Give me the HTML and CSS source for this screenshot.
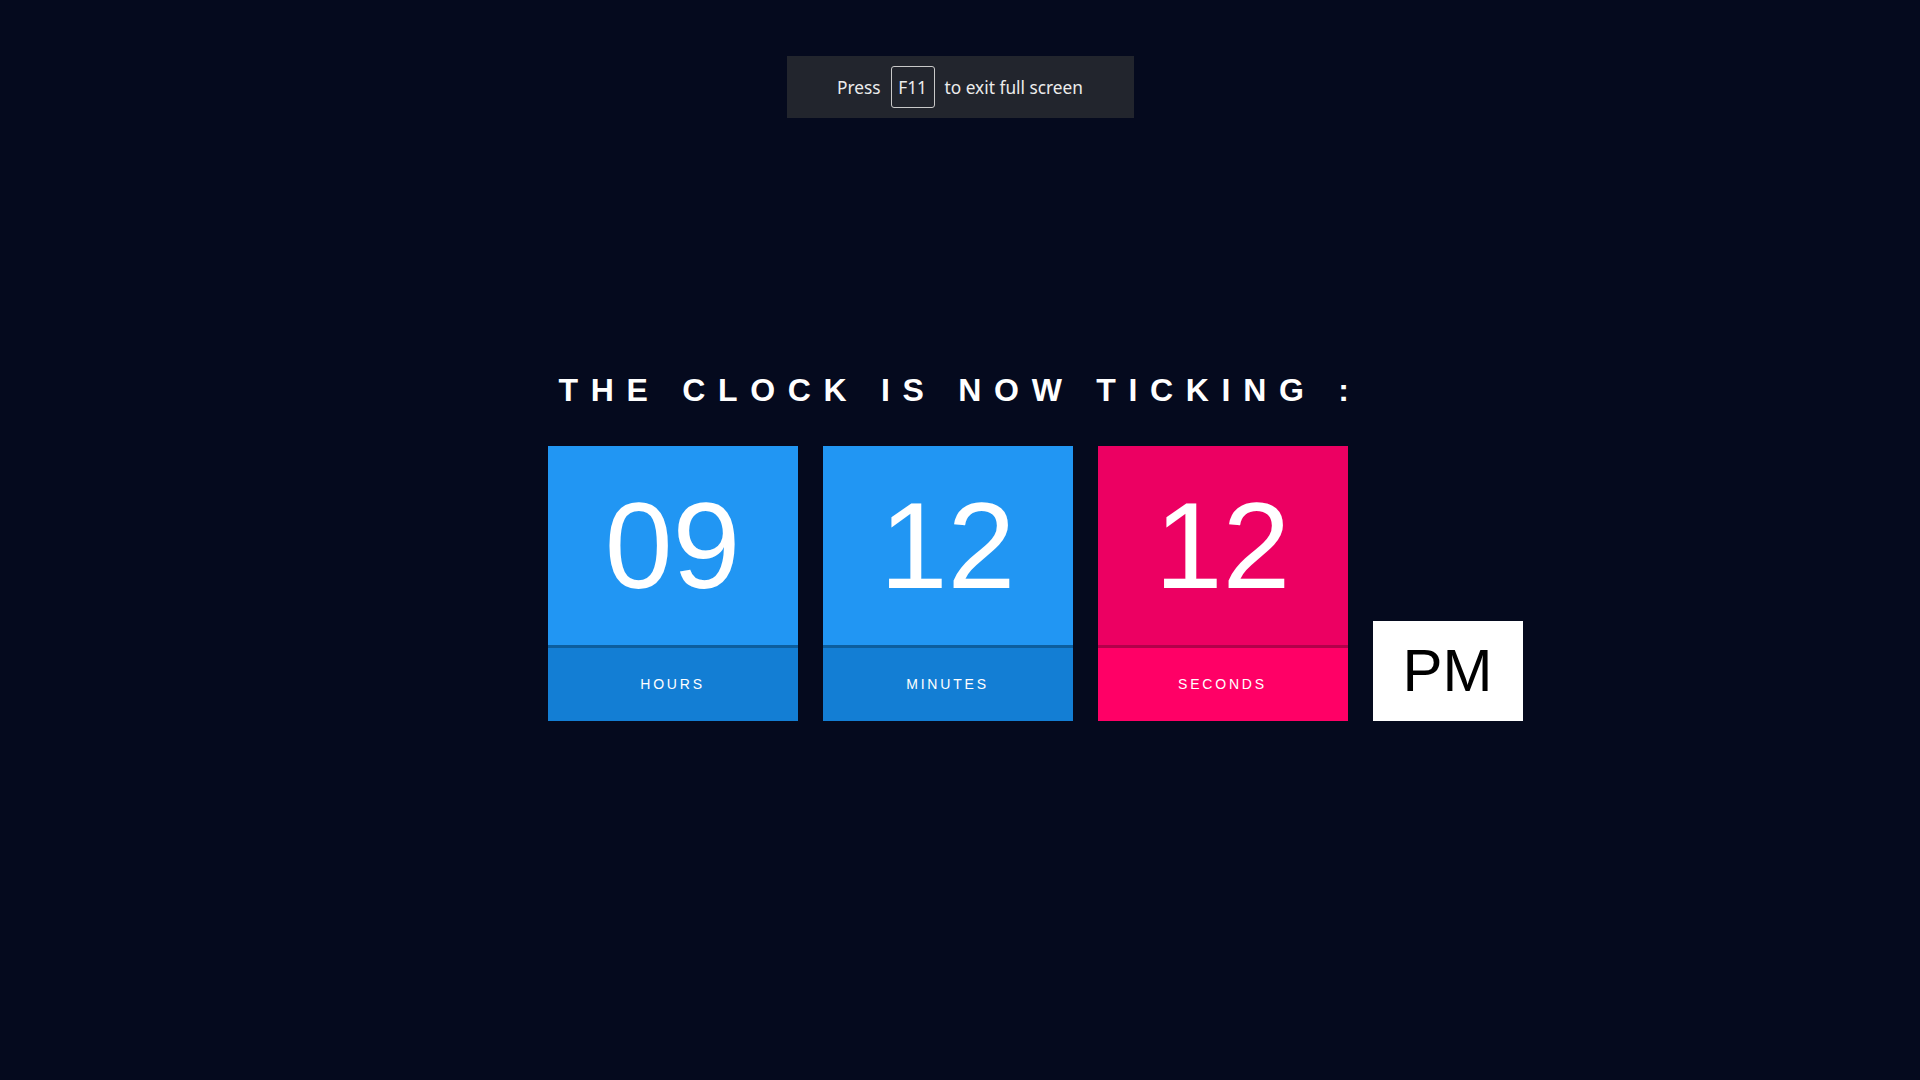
FILE: index.html
```html
<!DOCTYPE html>
<html lang="en">
<head>
<meta charset="utf-8">
<title>Clock</title>
<link rel="stylesheet" href="styles.css">
</head>
<body>
<div class="fs-banner">
  <span>Press</span>
  <span class="key">F11</span>
  <span>to exit full screen</span>
</div>
<h1 class="title">THE CLOCK IS NOW TICKING :</h1>
<div class="clock">
  <div class="unit blue">
    <div class="value">09</div>
    <div class="label">HOURS</div>
  </div>
  <div class="unit blue">
    <div class="value">12</div>
    <div class="label">MINUTES</div>
  </div>
  <div class="unit pink">
    <div class="value">12</div>
    <div class="label">SECONDS</div>
  </div>
  <div class="ampm">PM</div>
</div>
</body>
</html>
```
FILE: styles.css
```css
html, body {
  margin: 0;
  padding: 0;
}
body {
  background: #050a1e;
  width: 1920px;
  height: 1080px;
  overflow: hidden;
  font-family: "Liberation Sans", Arial, sans-serif;
}
.fs-banner {
  width: 347px;
  height: 62px;
  margin: 56px auto 0;
  background: #22252d;
  color: #ececec;
  font-family: "Noto Sans", "Open Sans", sans-serif;
  font-size: 17.3px;
  display: flex;
  align-items: center;
  justify-content: center;
  gap: 10px;
  box-sizing: border-box;
}
.fs-banner .key {
  width: 44px;
  height: 42px;
  box-sizing: border-box;
  border: 1px solid #c9c9c9;
  border-radius: 3px;
  display: flex;
  align-items: center;
  justify-content: center;
}
.title {
  margin: 252px 0 0;
  text-align: center;
  color: #ffffff;
  font-size: 32px;
  font-weight: bold;
  line-height: 40px;
  letter-spacing: 12.7px;
}
.clock {
  width: 825px;
  margin: 36px auto 0;
  display: flex;
  align-items: flex-end;
  gap: 25px;
}
.unit {
  width: 250px;
  flex-shrink: 0;
  color: #fff;
  text-align: center;
}
.value {
  height: 199px;
  font-size: 122px;
  line-height: 200px;
}
.label {
  height: 73px;
  line-height: 73px;
  border-top: 3px solid rgba(0, 0, 0, 0.3);
  font-size: 14px;
  letter-spacing: 2.8px;
}
.blue .value { background: #2196f3; }
.blue .label { background: #137ed4; border-top-color: #0c5e9e; }
.pink .value { background: #ec0062; }
.pink .label { background: #ff0066; border-top-color: #b2004a; }
.ampm {
  width: 150px;
  height: 100px;
  flex-shrink: 0;
  background: #ffffff;
  color: #000;
  font-size: 60px;
  line-height: 100px;
  text-align: center;
}
```
